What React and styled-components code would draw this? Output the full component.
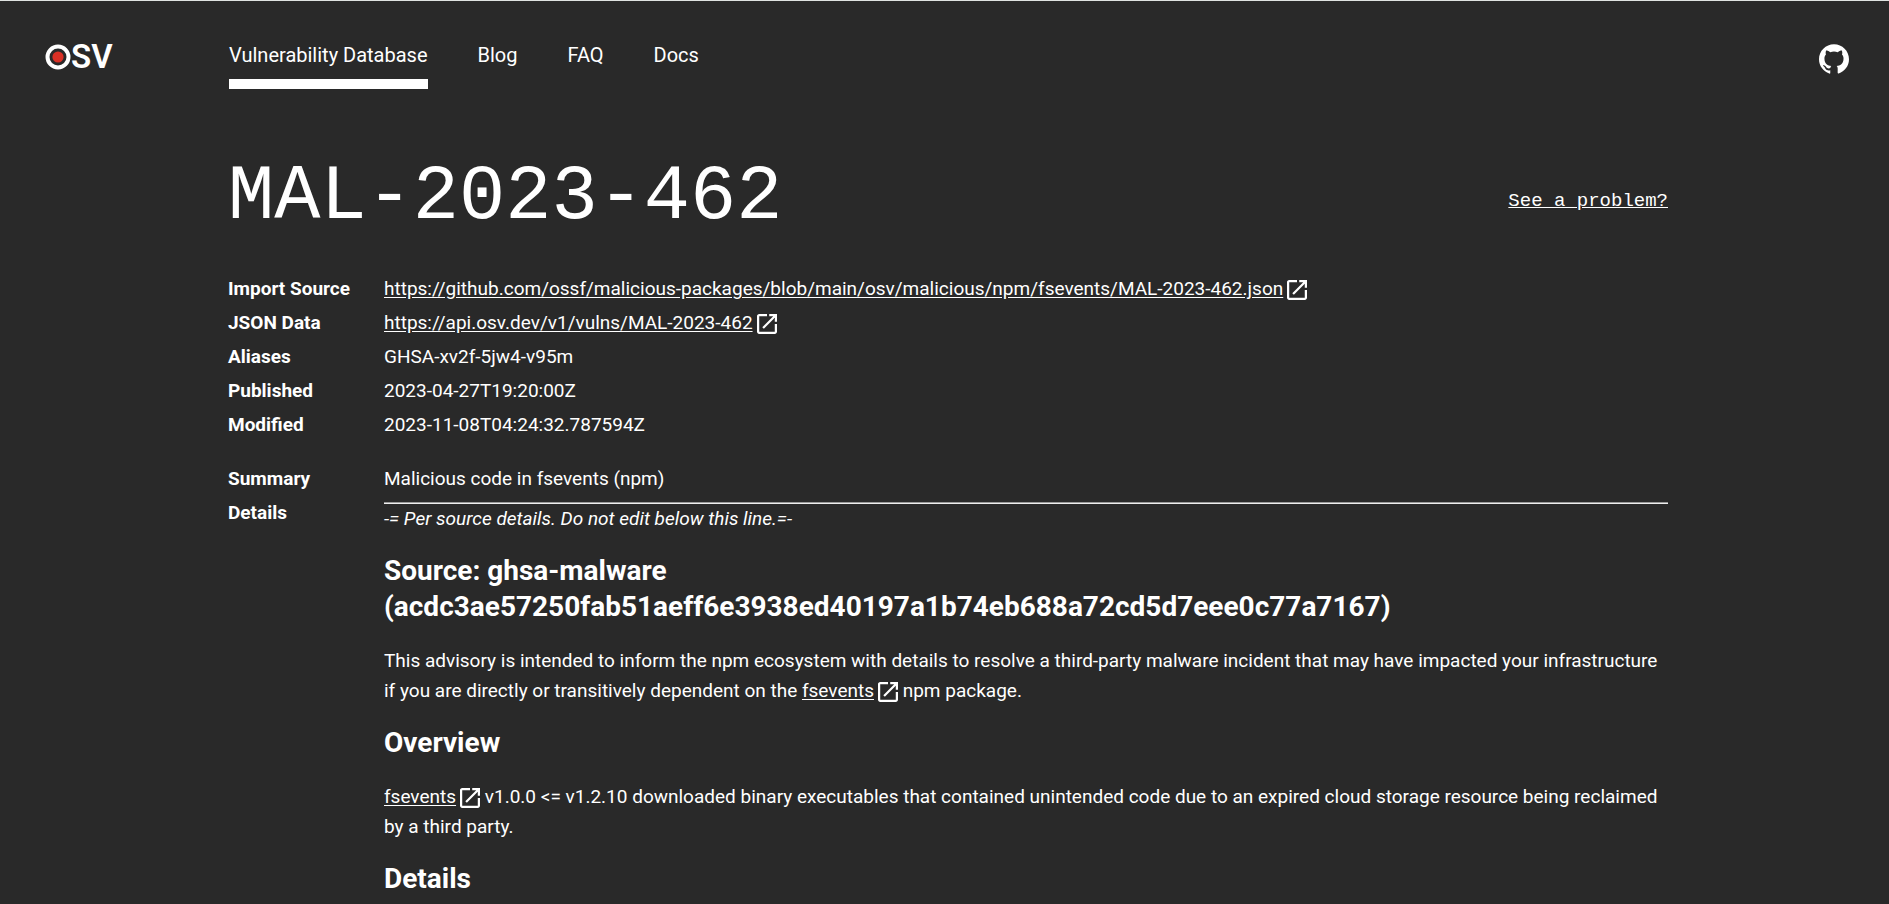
import React from "react";
import styled, { createGlobalStyle } from "styled-components";
import { SiGithub } from "react-icons/si";

const GlobalStyle = createGlobalStyle`
  *, *::before, *::after { box-sizing: border-box; }
  body {
    margin: 0;
    background: #292929;
    color: #fff;
    font-family: Roboto, "Liberation Sans", sans-serif;
    font-size: 19px;
    line-height: 30px;
  }
`;

const Page = styled.div`
  border-top: 1px solid #dfe3e1;
  height: 100vh;
  overflow: hidden;
`;

const Header = styled.header`
  display: flex;
  align-items: flex-start;
  padding: 39px 40px 0 45px;
`;

const LogoLink = styled.a`
  display: flex;
  align-items: center;
  flex: 0 0 184px;
  height: 34px;
  color: #fff;
  text-decoration: none;
  font-size: 33px;
  line-height: 40px;
  font-weight: 600;
`;

const Nav = styled.nav`
  display: flex;
  flex: 1;
  gap: 50px;
  font-size: 20px;
`;

const NavLink = styled.a`
  color: #fff;
  text-decoration: none;
  padding-bottom: 9px;
  border-bottom: 10px solid ${(p) => (p.$active ? "#fff" : "transparent")};
`;

const GithubLink = styled.a`
  display: flex;
  padding-top: 4px;
  color: #fff;
`;

const Main = styled.main`
  padding: 69px 221px 0 228px;
`;

const TitleRow = styled.div`
  display: flex;
  justify-content: space-between;
  align-items: center;
  margin-bottom: 36px;
`;

const Title = styled.h1`
  margin: 0;
  font: 400 77px/80px "Liberation Mono", monospace;
`;

const ProblemLink = styled.a`
  color: #fff;
  font-family: "Liberation Mono", monospace;
  padding-top: 6px;
`;

const Facts = styled.dl`
  display: grid;
  grid-template-columns: 156px 1fr;
  row-gap: 4px;
  margin: 0 0 ${(p) => (p.$spaced ? "24px" : "0")};
`;

const Term = styled.dt`
  font-weight: 700;
`;

const Value = styled.dd`
  margin: 0;
`;

const TextLink = styled.a`
  color: #fff;
  text-underline-offset: 2px;
`;

const OpenIcon = styled.svg`
  width: 20px;
  height: 20px;
  margin-left: 4px;
  vertical-align: -5px;
  fill: #fff;
`;

const Rule = styled.hr`
  margin: 4px 0 0;
  border: 0;
  border-top: 1px solid #9a9a9a;
  height: 2px;
  background: #eee;
`;

const Prose = styled.div`
  h2 {
    margin: 19px 0 21px;
    font-size: 28px;
    line-height: 36px;
    font-weight: 700;
  }
  p {
    margin: 0 0 19px;
  }
`;

function External({ href, children }) {
  return (
    <>
      <TextLink href={href}>{children}</TextLink>
      <OpenIcon viewBox="3 3 18 18" aria-hidden="true">
        <path d="M19 19H5V5h7V3H5c-1.11 0-2 .9-2 2v14c0 1.1.89 2 2 2h14c1.1 0 2-.9 2-2v-7h-2v7zM14 3v2h3.59l-9.83 9.83 1.41 1.41L19 6.41V10h2V3h-7z" />
      </OpenIcon>
    </>
  );
}

function LogoMark() {
  return (
    <svg width="26" height="26" viewBox="0 0 26 26" aria-hidden="true">
      <circle cx="13" cy="13" r="10.5" fill="none" stroke="#fff" strokeWidth="4" />
      <circle cx="13" cy="13" r="5.6" fill="#d93025" />
    </svg>
  );
}

const facts = [
  ["Import Source", <External href="https://github.com/ossf/malicious-packages/blob/main/osv/malicious/npm/fsevents/MAL-2023-462.json">https://github.com/ossf/malicious-packages/blob/main/osv/malicious/npm/fsevents/MAL-2023-462.json</External>],
  ["JSON Data", <External href="https://api.osv.dev/v1/vulns/MAL-2023-462">https://api.osv.dev/v1/vulns/MAL-2023-462</External>],
  ["Aliases", "GHSA-xv2f-5jw4-v95m"],
  ["Published", "2023-04-27T19:20:00Z"],
  ["Modified", "2023-11-08T04:24:32.787594Z"],
];

export default function App() {
  return (
    <Page>
      <GlobalStyle />
      <Header>
        <LogoLink href="/" aria-label="OSV">
          <LogoMark />
          <span>SV</span>
        </LogoLink>
        <Nav>
          <NavLink href="/list" $active>Vulnerability Database</NavLink>
          <NavLink href="/blog">Blog</NavLink>
          <NavLink href="/faq">FAQ</NavLink>
          <NavLink href="/docs">Docs</NavLink>
        </Nav>
        <GithubLink href="https://github.com/google/osv.dev" aria-label="GitHub">
          <SiGithub size={30} />
        </GithubLink>
      </Header>
      <Main>
        <TitleRow>
          <Title>MAL-2023-462</Title>
          <ProblemLink href="#problem">See a problem?</ProblemLink>
        </TitleRow>
        <Facts $spaced>
          {facts.map(([term, value]) => (
            <React.Fragment key={term}>
              <Term>{term}</Term>
              <Value>{value}</Value>
            </React.Fragment>
          ))}
        </Facts>
        <Facts>
          <Term>Summary</Term>
          <Value>Malicious code in fsevents (npm)</Value>
          <Term>Details</Term>
          <Value>
            <Rule />
            <Prose>
              <em>-= Per source details. Do not edit below this line.=-</em>
              <h2>Source: ghsa-malware (acdc3ae57250fab51aeff6e3938ed40197a1b74eb688a72cd5d7eee0c77a7167)</h2>
              <p>
                This advisory is intended to inform the npm ecosystem with details to resolve a third-party malware incident that may have impacted your infrastructure if you are directly or transitively dependent on the <External href="https://www.npmjs.com/package/fsevents">fsevents</External> npm package.
              </p>
              <h2>Overview</h2>
              <p>
                <External href="https://www.npmjs.com/package/fsevents">fsevents</External> v1.0.0 &lt;= v1.2.10 downloaded binary executables that contained unintended code due to an expired cloud storage resource being reclaimed by a third party.
              </p>
              <h2>Details</h2>
            </Prose>
          </Value>
        </Facts>
      </Main>
    </Page>
  );
}
